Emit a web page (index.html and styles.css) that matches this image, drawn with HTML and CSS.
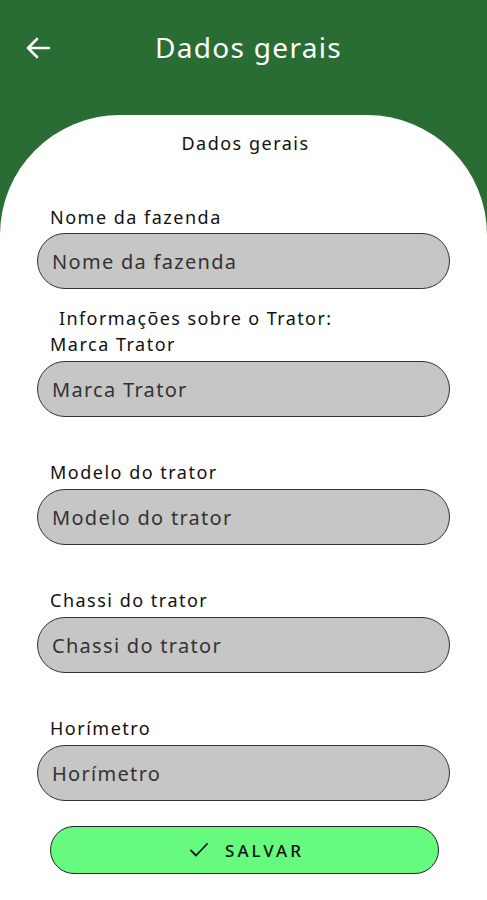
FILE: index.html
```html
<!DOCTYPE html>
<html>
  <head>
    <meta charset="UTF-8" />
    <title>Dados gerais</title>
    <link rel="stylesheet" href="styles.css">
  </head>

  <body>
    <div class="header">
      <span class="back">
        <svg width="26" height="24" viewBox="0 0 26 24">
          <path d="M24 12H3M12 3L3 12l9 9" fill="none" stroke="#fff" stroke-width="2.6" stroke-linecap="round" stroke-linejoin="round" />
        </svg>
      </span>
      <h1>Dados gerais</h1>
    </div>

    <div class="card">
      <h2>Dados gerais</h2>

      <div class="field first">
        <label>Nome da fazenda</label>
        <input type="text" placeholder="Nome da fazenda" />
      </div>

      <p class="section">Informações sobre o Trator:</p>

      <div class="field">
        <label>Marca Trator</label>
        <input type="text" placeholder="Marca Trator" />
      </div>
      <div class="field">
        <label>Modelo do trator</label>
        <input type="text" placeholder="Modelo do trator" />
      </div>
      <div class="field">
        <label>Chassi do trator</label>
        <input type="text" placeholder="Chassi do trator" />
      </div>
      <div class="field">
        <label>Horímetro</label>
        <input type="text" placeholder="Horímetro" />
      </div>

      <button class="save">
        <svg width="20" height="16" viewBox="0 0 20 16">
          <path d="M2 8.5l5 5L18 2" fill="none" stroke="#111" stroke-width="1.8" stroke-linecap="round" stroke-linejoin="round" />
        </svg>
        SALVAR
      </button>
    </div>
  </body>
</html>
```

FILE: styles.css
```css
/* pagina de dados gerais */
body {
  margin: 0;
  font-family: "Noto Sans", "Lato", sans-serif;
  background-color: #2a6d34;
  color: #111;
}

.header {
  height: 115px;
  display: flex;
  align-items: flex-start;
  padding-top: 28px;
  box-sizing: border-box;
  position: relative;
}

.header .back {
  position: absolute;
  left: 25px;
  top: 36px;
}

.header h1 {
  flex: 1;
  margin: 0;
  text-align: center;
  color: #fff;
  font-weight: 400;
  font-size: 28px;
  line-height: 38px;
  letter-spacing: 1.3px;
  padding-left: 10px;
}

.card {
  background-color: #fff;
  border-radius: 120px 120px 0 0;
  min-height: 785px;
  padding: 17px 37px 27px 37px;
  box-sizing: border-box;
}

.card h2 {
  margin: 0;
  text-align: center;
  font-size: 18px;
  font-weight: 400;
  line-height: 22px;
  letter-spacing: 1.5px;
  padding-left: 4px;
}

.field {
  margin-top: 44px;
}

.field.first {
  margin-top: 52px;
}

.field label {
  display: block;
  font-size: 18px;
  line-height: 22px;
  letter-spacing: 1.5px;
  padding-left: 13px;
  margin-bottom: 6px;
}

.field.first label {
  margin-bottom: 5px;
}

.field input {
  display: block;
  width: 100%;
  height: 56px;
  box-sizing: border-box;
  background-color: #c6c6c6;
  border: 1.5px solid #333;
  border-radius: 28px;
  padding: 0 14px;
  font-family: inherit;
  font-size: 20px;
  letter-spacing: 1.3px;
  color: #333;
  outline: none;
}

.field input::placeholder {
  color: #333;
}

.section {
  margin: 18px 0 0 0;
  font-size: 18px;
  line-height: 22px;
  letter-spacing: 1.4px;
  padding-left: 22px;
}

.section + .field {
  margin-top: 4px;
}

.save {
  display: flex;
  align-items: center;
  justify-content: center;
  gap: 16px;
  width: 389px;
  height: 48px;
  margin: 25px 0 0 13px;
  background-color: #66fb7e;
  border: 1.5px solid #222;
  border-radius: 24px;
  font-family: inherit;
  font-size: 17px;
  font-weight: 500;
  letter-spacing: 3px;
  color: #111;
  cursor: pointer;
  padding: 0 0 0 4px;
}
```
